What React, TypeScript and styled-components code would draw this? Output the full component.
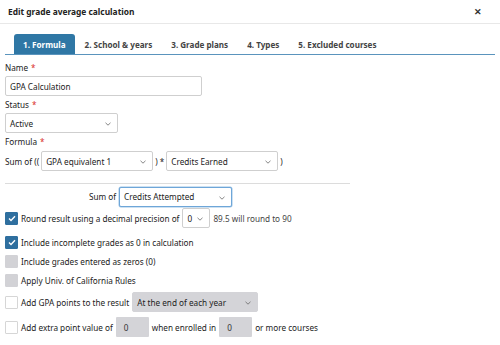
import React from 'react';
import styled, { createGlobalStyle } from 'styled-components';

const GlobalStyle = createGlobalStyle`
  body {
    margin: 0;
    background: #ffffff;
    font-family: 'Noto Sans', 'Open Sans', sans-serif;
    color: #222;
  }
`;

const Dialog = styled.div`
  width: 500px;
  height: 345px;
  background: #fff;
  overflow: hidden;
  font-size: 8.2px;
`;

const Header = styled.div`
  height: 23px;
  padding: 0 18px 0 8px;
  display: flex;
  align-items: center;
  justify-content: space-between;
  border-bottom: 1px solid #e8e8e8;
`;

const Title = styled.div`
  font-weight: 700;
  font-size: 8.4px;
  color: #222;
`;

const Close = styled.div`
  font-weight: 700;
  font-size: 9px;
  color: #333;
`;

const TabBar = styled.div`
  margin: 10px 5px 0 5px;
  padding-left: 9px;
  display: flex;
  gap: 1px;
  border-bottom: 1.5px solid #5a94bd;
`;

const Tab = styled.div<{ $active?: boolean }>`
  height: 20px;
  padding: 0 9px;
  display: flex;
  align-items: center;
  font-weight: 700;
  font-size: 8.1px;
  border-radius: 3px 3px 0 0;
  color: ${p => (p.$active ? '#fff' : '#444')};
  background: ${p => (p.$active ? '#2f77a5' : 'transparent')};
`;

const Body = styled.div`
  padding: 4px 5px 0 5px;
  display: flex;
  flex-direction: column;
`;

const Label = styled.div`
  height: 17px;
  display: flex;
  align-items: center;
  color: #222;
`;

const Req = styled.span`
  color: #d9302c;
  margin-left: 3px;
`;

const TextInput = styled.input<{ $w: number }>`
  box-sizing: border-box;
  width: ${p => p.$w}px;
  height: 20px;
  border: 1px solid #cfcfcf;
  border-radius: 2px;
  padding: 0 4px;
  font: inherit;
  color: #222;
`;

const SelectWrap = styled.div<{ $w: number; $focus?: boolean; $gray?: boolean }>`
  position: relative;
  box-sizing: border-box;
  width: ${p => p.$w}px;
  height: 20px;
  border: 1px solid ${p => (p.$focus ? '#6ea6d8' : p.$gray ? '#d4d4d8' : '#cfcfcf')};
  box-shadow: ${p => (p.$focus ? '0 0 0 0.5px #9cc3e6' : 'none')};
  border-radius: 2px;
  background: ${p => (p.$gray ? '#d4d4d8' : '#fff')};
  display: flex;
  align-items: center;
  padding: 0 4px;
  flex-shrink: 0;
`;

const SelectText = styled.span`
  color: #222;
  white-space: nowrap;
`;

const Chevron = styled.svg`
  position: absolute;
  right: 6px;
  top: 8px;
  width: 6px;
  height: 4px;
`;

const Select: React.FC<{ w: number; value: string; focus?: boolean; gray?: boolean }> = ({ w, value, focus, gray }) => (
  <SelectWrap $w={w} $focus={focus} $gray={gray}>
    <SelectText>{value}</SelectText>
    <Chevron viewBox="0 0 6 4">
      <path d="M0.5 0.8 L3 3.2 L5.5 0.8" fill="none" stroke="#666" strokeWidth="0.8" />
    </Chevron>
  </SelectWrap>
);

const Row = styled.div<{ $gap?: number }>`
  display: flex;
  align-items: center;
  gap: ${p => p.$gap ?? 3}px;
  height: 20px;
  margin-top: 1px;
`;

const Divider = styled.div`
  width: 345px;
  height: 1px;
  background: #dcdcdc;
  margin: 12px 0 2px 0;
`;

const SumRow = styled(Row)`
  padding-left: 84px;
  height: 19px;
`;

const CheckRow = styled.div<{ $h: number; $top: number }>`
  display: flex;
  align-items: center;
  gap: 3px;
  height: ${p => p.$h}px;
  margin-top: ${p => p.$top}px;
  white-space: nowrap;
`;

const Box = styled.span<{ $state: 'on' | 'off' | 'gray' }>`
  box-sizing: border-box;
  width: 13px;
  height: 13px;
  border-radius: 1px;
  flex-shrink: 0;
  display: flex;
  align-items: center;
  justify-content: center;
  background: ${p => (p.$state === 'on' ? '#2f6f9f' : p.$state === 'gray' ? '#d2d2d6' : '#fff')};
  border: 1px solid ${p => (p.$state === 'on' ? '#2f6f9f' : p.$state === 'gray' ? '#d2d2d6' : '#d6d6d6')};
`;

const Check: React.FC<{ state: 'on' | 'off' | 'gray' }> = ({ state }) => (
  <Box $state={state}>
    {state === 'on' && (
      <svg width="8" height="7" viewBox="0 0 8 7">
        <path d="M1 3.6 L3 5.5 L7 1.3" fill="none" stroke="#fff" strokeWidth="1.4" />
      </svg>
    )}
  </Box>
);

const GrayInput = styled.div<{ $w: number }>`
  box-sizing: border-box;
  width: ${p => p.$w}px;
  height: 20px;
  background: #d4d4d8;
  border-radius: 1px;
  display: flex;
  align-items: center;
  padding-left: 8px;
  color: #333;
`;

const Muted = styled.span`
  color: #444;
`;

export default function App() {
  return (
    <Dialog>
      <GlobalStyle />
      <Header>
        <Title>Edit grade average calculation</Title>
        <Close>✕</Close>
      </Header>
      <TabBar>
        <Tab $active>1. Formula</Tab>
        <Tab>2. School &amp; years</Tab>
        <Tab>3. Grade plans</Tab>
        <Tab>4. Types</Tab>
        <Tab>5. Excluded courses</Tab>
      </TabBar>
      <Body>
        <Label>Name<Req>*</Req></Label>
        <TextInput $w={197} defaultValue="GPA Calculation" />
        <Label>Status<Req>*</Req></Label>
        <Select w={113} value="Active" />
        <Label>Formula<Req>*</Req></Label>
        <Row $gap={2}>
          <span>Sum of ((</span>
          <Select w={112} value="GPA equivalent 1" />
          <span>) *</span>
          <Select w={112} value="Credits Earned" />
          <span>)</span>
        </Row>
        <Divider />
        <SumRow>
          <span>Sum of</span>
          <Select w={113} value="Credits Attempted" focus />
        </SumRow>
        <CheckRow $h={20} $top={2}>
          <Check state="on" />
          <span>Round result using a decimal precision of</span>
          <Select w={28} value="0" />
          <Muted>89.5 will round to 90</Muted>
        </CheckRow>
        <CheckRow $h={16} $top={6}>
          <Check state="on" />
          <span>Include incomplete grades as 0 in calculation</span>
        </CheckRow>
        <CheckRow $h={16} $top={3}>
          <Check state="gray" />
          <span>Include grades entered as zeros (0)</span>
        </CheckRow>
        <CheckRow $h={16} $top={3}>
          <Check state="gray" />
          <span>Apply Univ. of California Rules</span>
        </CheckRow>
        <CheckRow $h={20} $top={4}>
          <Check state="off" />
          <span>Add GPA points to the result</span>
          <Select w={126} value="At the end of each year" gray />
        </CheckRow>
        <CheckRow $h={20} $top={5}>
          <Check state="off" />
          <span>Add extra point value of</span>
          <GrayInput $w={33}>0</GrayInput>
          <span>when enrolled in</span>
          <GrayInput $w={33}>0</GrayInput>
          <span>or more courses</span>
        </CheckRow>
      </Body>
    </Dialog>
  );
}
